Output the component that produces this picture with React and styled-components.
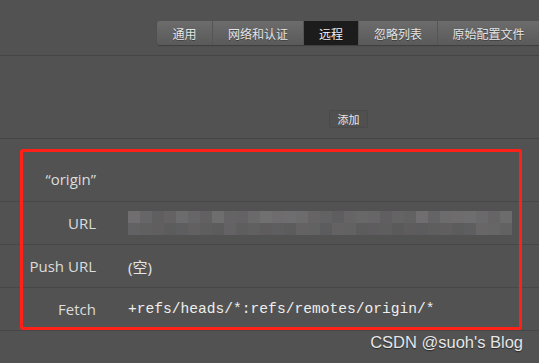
import React from "react";
import styled, { createGlobalStyle } from "styled-components";

const Global = createGlobalStyle`
  html, body { margin: 0; padding: 0; }
  body {
    background: #525252;
    width: 539px;
    height: 363px;
    overflow: hidden;
    font-family: "Open Sans", "Noto Sans CJK SC", sans-serif;
  }
`;

const Page = styled.div`
  position: relative;
  width: 539px;
  height: 363px;
  background: #525252;
`;

const Header = styled.div`
  height: 55px;
  box-sizing: border-box;
  border-bottom: 1px solid #454545;
  height: 56px;
  display: flex;
  justify-content: flex-end;
  align-items: flex-start;
  padding-top: 21px;
`;

const TabBar = styled.div`
  display: flex;
  height: 24px;
  border-radius: 3px 0 0 3px;
  overflow: hidden;
  background: linear-gradient(#6c6c6c, #5a5a5a);
  box-shadow: 0 1px 1px rgba(0, 0, 0, 0.25);
`;

const Tab = styled.div`
  display: flex;
  align-items: center;
  justify-content: center;
  width: ${(p) => p.$w}px;
  box-sizing: border-box;
  font-family: "Noto Sans CJK SC", sans-serif;
  font-size: 12px;
  color: ${(p) => (p.$active ? "#f2f2f2" : "#e4e4e4")};
  background: ${(p) => (p.$active ? "#1c1c1c" : "transparent")};
  border-left: ${(p) => (p.$first ? "none" : "1px solid #555")};
  text-shadow: 0 1px 0 rgba(0, 0, 0, 0.35);
`;

const Toolbar = styled.div`
  height: 83px;
  box-sizing: border-box;
  border-bottom: 1px solid #454545;
  padding-top: 54px;
  padding-left: 329px;
`;

const Button = styled.div`
  width: 39px;
  height: 18px;
  box-sizing: border-box;
  border: 1px solid #4a4a4a;
  border-radius: 2px;
  background: #505050;
  display: flex;
  align-items: center;
  justify-content: center;
  font-family: "Noto Sans CJK SC", sans-serif;
  font-size: 11px;
  color: #e8e8e8;
`;

const Row = styled.div`
  display: grid;
  grid-template-columns: 96px 1fr;
  column-gap: 32px;
  align-items: ${(p) => (p.$header ? "end" : "center")};
  height: ${(p) => p.$h}px;
  box-sizing: border-box;
  padding-bottom: ${(p) => (p.$header ? "12px" : "0")};
  border-bottom: 1px solid #474747;
`;

const Label = styled.div`
  text-align: right;
  font-family: "Open Sans", sans-serif;
  font-size: 15px;
  color: #dcdcdc;
  white-space: nowrap;
`;

const Value = styled.div`
  font-family: "Open Sans", "Noto Sans CJK SC", sans-serif;
  font-size: 15px;
  color: #e6e6e6;
`;

const Mono = styled.div`
  font-family: "Liberation Mono", monospace;
  font-size: 14.6px;
  color: #eeeeee;
  white-space: nowrap;
`;

const Mosaic = styled.div`
  display: grid;
  grid-template-columns: repeat(32, 12px);
  grid-auto-rows: 12px;
`;

const Block = styled.div`
  background: ${(p) => p.$c};
`;

const Highlight = styled.div`
  position: absolute;
  left: 20px;
  top: 149px;
  width: 502px;
  height: 181px;
  box-sizing: border-box;
  border: 3px solid #ff2117;
  border-radius: 3px;
  pointer-events: none;
`;

const Watermark = styled.div`
  position: absolute;
  right: 16px;
  top: 333px;
  font-family: "Liberation Sans", Arial, sans-serif;
  font-size: 16.5px;
  color: #e6e6e6;
  text-shadow: 0 1px 1px rgba(0, 0, 0, 0.5);
`;

const top = [
  0x6e, 0x66, 0x5f, 0x62, 0x6c, 0x66, 0x60, 0x6e, 0x64, 0x62, 0x6a, 0x70,
  0x6c, 0x6e, 0x6c, 0x64, 0x62, 0x5e, 0x64, 0x68, 0x66, 0x5e, 0x64, 0x62,
  0x6e, 0x64, 0x6c, 0x6c, 0x6e, 0x6a, 0x64, 0x6c,
];
const bottom = [
  0x62, 0x60, 0x5e, 0x5c, 0x5e, 0x60, 0x5e, 0x5c, 0x62, 0x5e, 0x60, 0x5c,
  0x5e, 0x5c, 0x62, 0x62, 0x5c, 0x62, 0x62, 0x5c, 0x5c, 0x5e, 0x5a, 0x5c,
  0x5c, 0x5e, 0x5e, 0x5c, 0x5e, 0x66, 0x66, 0x62,
];
const hex = (v, tint) => {
  const r = v + (tint % 3 === 0 ? 2 : 0);
  const g = v;
  const b = v + (tint % 4 === 1 ? 3 : 0);
  return `rgb(${r},${g},${b})`;
};

const tabs = [
  { t: "通用", w: 55 },
  { t: "网络和认证", w: 91 },
  { t: "远程", w: 55, active: true },
  { t: "忽略列表", w: 79 },
  { t: "原始配置文件", w: 102 },
];

export default function App() {
  return (
    <Page>
      <Global />
      <Header>
        <TabBar>
          {tabs.map((tab, i) => (
            <Tab key={tab.t} $w={tab.w} $active={tab.active} $first={i === 0}>
              {tab.t}
            </Tab>
          ))}
        </TabBar>
      </Header>
      <Toolbar>
        <Button>添加</Button>
      </Toolbar>
      <Row $h={63} $header>
        <Label>“origin”</Label>
        <div />
      </Row>
      <Row $h={43}>
        <Label>URL</Label>
        <Mosaic>
          {top.map((v, i) => (
            <Block key={"t" + i} $c={hex(v, i)} />
          ))}
          {bottom.map((v, i) => (
            <Block key={"b" + i} $c={hex(v, i + 1)} />
          ))}
        </Mosaic>
      </Row>
      <Row $h={43}>
        <Label>Push URL</Label>
        <Value>(空)</Value>
      </Row>
      <Row $h={43}>
        <Label>Fetch</Label>
        <Mono>+refs/heads/*:refs/remotes/origin/*</Mono>
      </Row>
      <Highlight />
      <Watermark>CSDN @suoh's Blog</Watermark>
    </Page>
  );
}
